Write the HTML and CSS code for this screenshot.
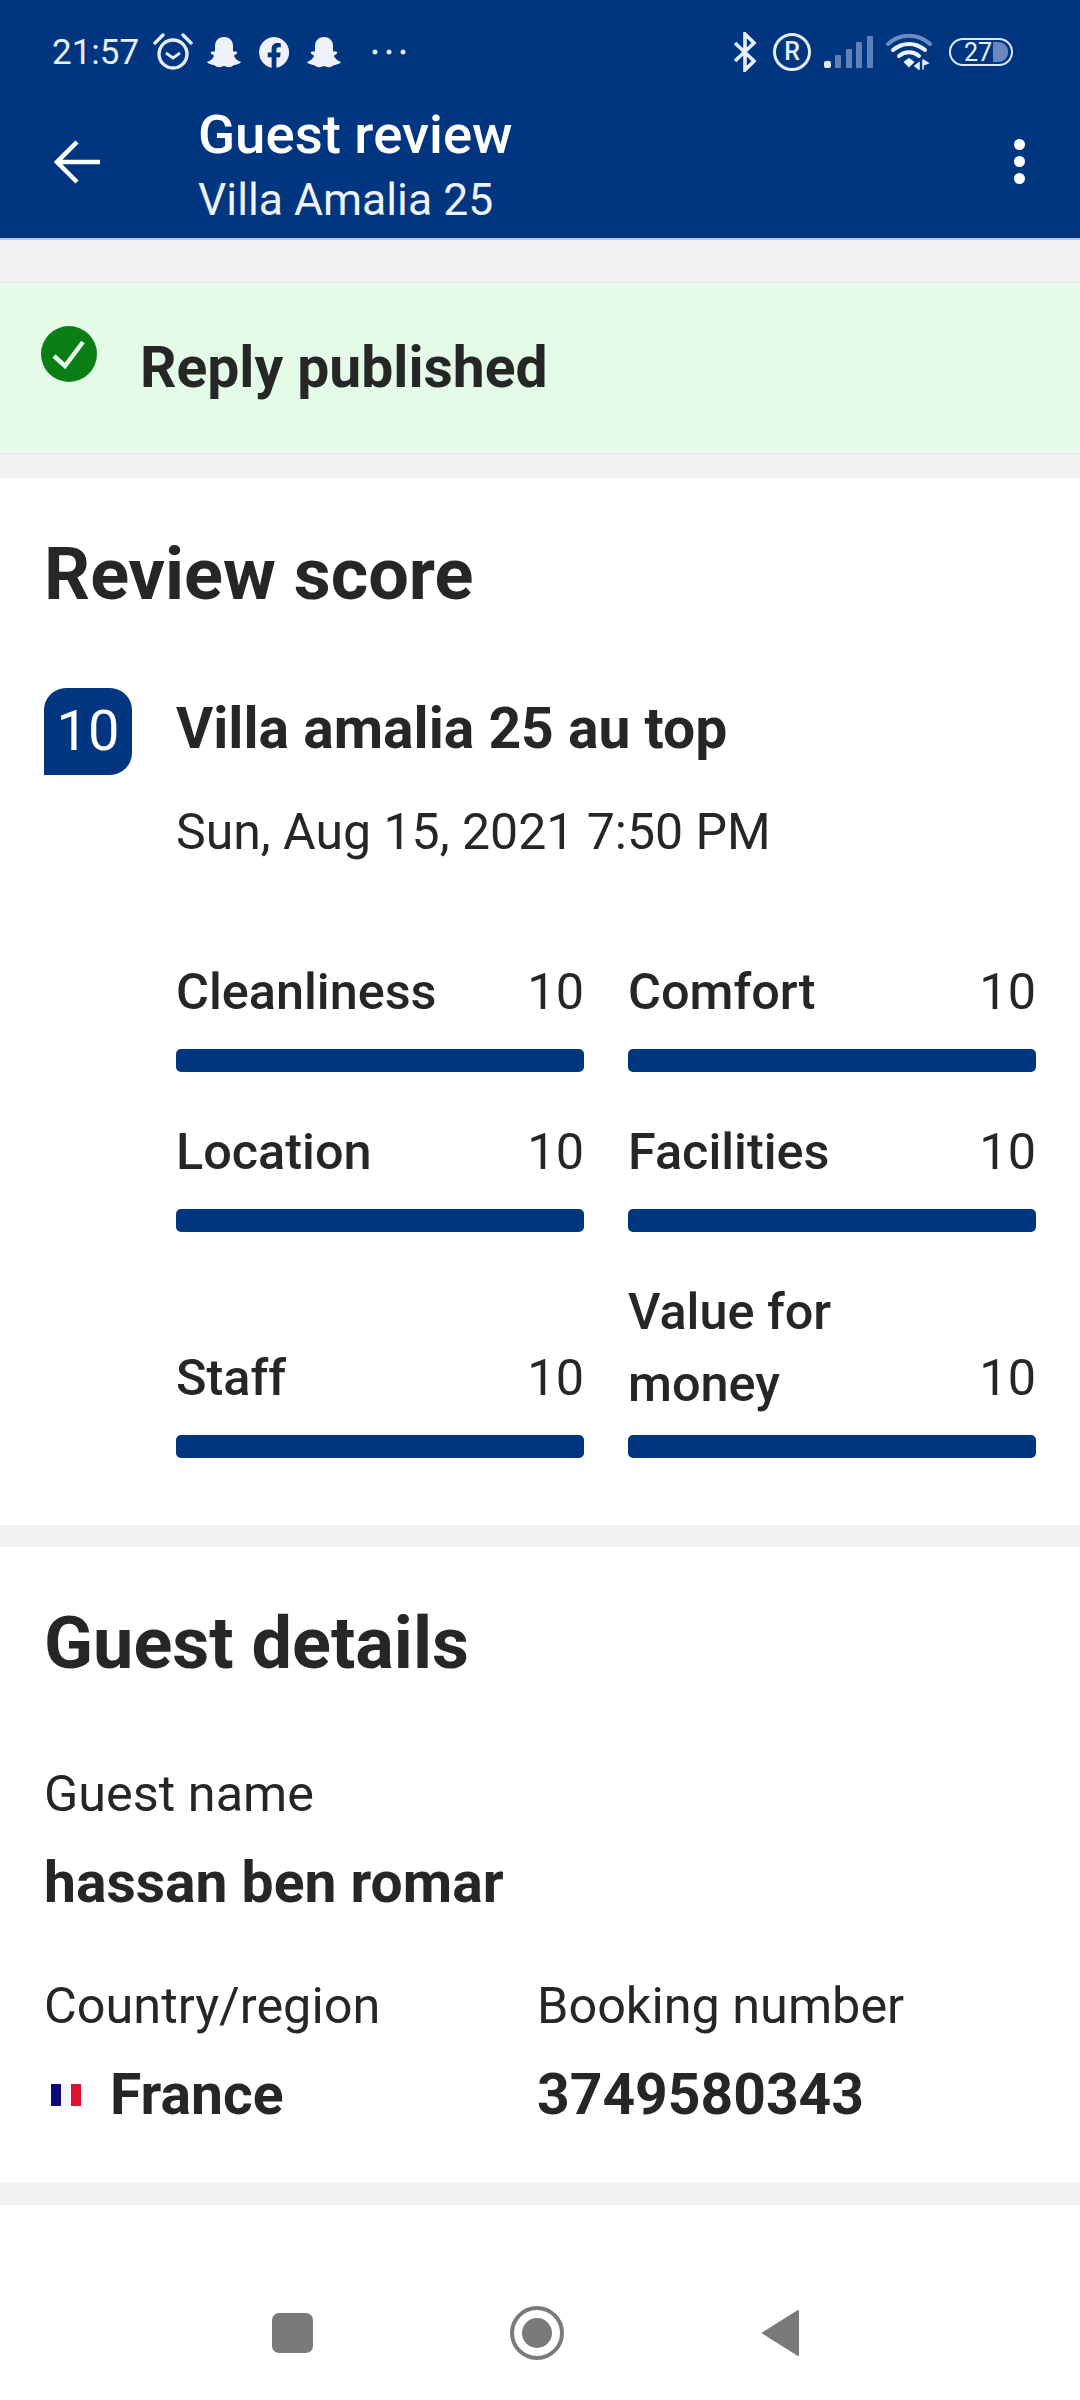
FILE: index.html
```html
<!DOCTYPE html>
<html lang="en">
<head>
  <meta charset="UTF-8">
  <title>Guest review</title>
  <link rel="stylesheet" href="styles.css">
</head>
<body>
  <header class="header">
    <div class="status-bar">
      <div class="status-left">
        <span class="time">21:57</span>
        <svg class="ic-alarm" viewBox="0 0 40 38" fill="none" stroke="#e6eefa" stroke-width="3.400">
          <circle cx="20" cy="21" r="14"/>
          <path d="M13 20l7 5 7-5" stroke-width="2.800"/>
          <path d="M2 10L10 2M38 10L30 2" stroke-linecap="round"/>
        </svg>
        <svg class="ic-ghost" viewBox="0 0 34 32"><path fill="#eef1f8" d="M17 1c6 0 9 4 9 9v5c1 1 3 0 4 1 1 2-3 3-3 4 1 3 4 5 7 6-1 2-4 2-6 3-2 0-3 2-5 2-2 1-4-1-6-1s-4 2-6 1c-2 0-3-2-5-2-2-1-5-1-6-3 3-1 6-3 7-6 0-1-4-2-3-4 1-1 3 0 4-1v-5c0-5 3-9 9-9z"/></svg>
        <svg class="ic-fb" viewBox="0 0 32 32"><path fill="#eef1f8" d="M16 0a16 16 0 0 0-3 31.700V21H9v-5h4v-3.500c0-4 2.400-6.200 6-6.200 1.800 0 3.500.3 3.500.3v4h-2c-2 0-2.500 1.200-2.500 2.500V16h4.400l-.7 5H18v10.700A16 16 0 0 0 16 0z"/></svg>
        <svg class="ic-ghost ghost-last" viewBox="0 0 34 32"><path fill="#eef1f8" d="M17 1c6 0 9 4 9 9v5c1 1 3 0 4 1 1 2-3 3-3 4 1 3 4 5 7 6-1 2-4 2-6 3-2 0-3 2-5 2-2 1-4-1-6-1s-4 2-6 1c-2 0-3-2-5-2-2-1-5-1-6-3 3-1 6-3 7-6 0-1-4-2-3-4 1-1 3 0 4-1v-5c0-5 3-9 9-9z"/></svg>
        <svg class="ic-more" viewBox="0 0 34 6" fill="#dfe7f5"><circle cx="3" cy="3" r="2.500"/><circle cx="17" cy="3" r="2.500"/><circle cx="31" cy="3" r="2.500"/></svg>
      </div>
      <div class="status-right">
        <svg class="ic-bt" viewBox="0 0 26 40" fill="none" stroke="#e6f0fc" stroke-width="3.600"><path d="M3 11l19 18-9 9V2l9 9L3 29"/></svg>
        <span class="reg">R</span>
        <svg class="ic-signal" viewBox="0 0 49 32">
          <rect x="0" y="25" width="7" height="7" rx="2" fill="#dfe9f8"/>
          <rect x="11" y="19" width="6" height="13" rx="1" fill="#5f80b8"/>
          <rect x="22" y="13" width="6" height="19" rx="1" fill="#5f80b8"/>
          <rect x="32" y="6" width="6" height="26" rx="1" fill="#5f80b8"/>
          <rect x="43" y="0" width="6" height="32" rx="1" fill="#5f80b8"/>
        </svg>
        <svg class="ic-wifi" viewBox="0 0 46 36" fill="none" stroke-linecap="round">
          <path d="M2 10C14-1 32-1 44 10" stroke="#6f8cc0" stroke-width="4"/>
          <path d="M7 16c10-8 22-8 32 0" stroke="#f0f5fc" stroke-width="4"/>
          <path d="M13 22c6-5 14-5 20 0" stroke="#f0f5fc" stroke-width="4"/>
          <path d="M19 28l4-3 4 3-4 4z" fill="#f0f5fc" stroke="#f0f5fc" stroke-width="2"/>
          <path d="M33 29l-4 3 4 3zM37 26v9M37 26l5 3-5 2" stroke="#e6eefa" stroke-width="1.600" fill="#e6eefa"/>
        </svg>
        <div class="battery"><span class="battery-num">27</span><span class="battery-fill"></span></div>
      </div>
    </div>
    <div class="app-bar">
      <svg class="ic-back" viewBox="0 0 46 44" fill="none" stroke="#fff" stroke-width="4.500"><path d="M46 22H4M23 2L3 22l20 20"/></svg>
      <div class="app-title">
        <h1>Guest review</h1>
        <p>Villa Amalia 25</p>
      </div>
      <div class="kebab"><i></i><i></i><i></i></div>
    </div>
  </header>

  <div class="banner">
    <svg class="ic-check" viewBox="0 0 56 56">
      <circle cx="28" cy="28" r="28" fill="#0a7d14"/>
      <path d="M13 30l11 10L42 16" fill="none" stroke="#e8fbe8" stroke-width="4.500"/>
    </svg>
    <span class="banner-text">Reply published</span>
  </div>

  <section class="card score-card">
    <h2>Review score</h2>
    <div class="review-row">
      <div class="badge">10</div>
      <div class="review-info">
        <div class="review-title">Villa amalia 25 au top</div>
        <div class="review-date">Sun, Aug 15, 2021 7:50 PM</div>
      </div>
    </div>
    <div class="scores">
      <div class="score">
        <div class="score-head"><span>Cleanliness</span><span>10</span></div>
        <div class="bar"></div>
      </div>
      <div class="score">
        <div class="score-head"><span>Comfort</span><span>10</span></div>
        <div class="bar"></div>
      </div>
      <div class="score">
        <div class="score-head"><span>Location</span><span>10</span></div>
        <div class="bar"></div>
      </div>
      <div class="score">
        <div class="score-head"><span>Facilities</span><span>10</span></div>
        <div class="bar"></div>
      </div>
      <div class="score">
        <div class="score-head"><span>Staff</span><span>10</span></div>
        <div class="bar"></div>
      </div>
      <div class="score">
        <div class="score-head"><span class="narrow">Value for money</span><span>10</span></div>
        <div class="bar"></div>
      </div>
    </div>
  </section>

  <section class="card guest-card">
    <h2>Guest details</h2>
    <div class="label first-label">Guest name</div>
    <div class="value">hassan ben romar</div>
    <div class="guest-cols">
      <div class="guest-col">
        <div class="label">Country/region</div>
        <div class="value country">
          <svg class="flag" viewBox="0 0 30 22">
            <rect width="10" height="22" fill="#0a0a78"/>
            <rect x="10" width="10" height="22" fill="#f4f4fa"/>
            <rect x="20" width="10" height="22" fill="#dc1430"/>
          </svg>
          France
        </div>
      </div>
      <div class="guest-col">
        <div class="label">Booking number</div>
        <div class="value">3749580343</div>
      </div>
    </div>
  </section>

  <nav class="nav-bar">
    <span class="nav-square"></span>
    <span class="nav-home"><i></i></span>
    <svg class="nav-back" viewBox="0 0 37 46"><path fill="#7a7a7a" stroke="#7a7a7a" stroke-width="2" stroke-linejoin="round" d="M36 1v44L1 23z"/></svg>
  </nav>
</body>
</html>
```

FILE: styles.css
```css
* {
  box-sizing: border-box;
}

html, body {
  margin: 0;
  padding: 0;
}

body {
  width: 1080px;
  height: 2400px;
  overflow: hidden;
  font-family: Roboto, "Liberation Sans", sans-serif;
  background: #f2f2f2;
  color: #262626;
}

h1, h2, p {
  margin: 0;
}

/* header */
.header {
  background: #003580;
  height: 238px;
  color: #fff;
  box-shadow: 0 2px 0 #b9c7e2;
}

.status-bar {
  height: 104px;
  display: flex;
  justify-content: space-between;
  align-items: center;
  padding: 0 67px 0 52px;
}

.status-left,
.status-right {
  display: flex;
  align-items: center;
}

.time {
  font-size: 35px;
  color: #e6eefa;
  width: 101px;
}

.ic-alarm {
  width: 40px;
  height: 38px;
  margin-right: 14px;
}

.ic-ghost {
  width: 34px;
  height: 32px;
  margin-right: 18px;
}

.ghost-last {
  margin-right: 31px;
}

.ic-fb {
  width: 31px;
  height: 31px;
  margin-right: 17px;
}

.ic-more {
  width: 34px;
  height: 6px;
}

.ic-bt {
  width: 26px;
  height: 40px;
  margin-right: 15px;
}

.reg {
  width: 38px;
  height: 38px;
  border: 3px solid #e6f0fc;
  border-radius: 50%;
  font-size: 25px;
  font-weight: 500;
  line-height: 32px;
  text-align: center;
  color: #e6f0fc;
  margin-right: 13px;
}

.ic-signal {
  width: 49px;
  height: 32px;
  margin-right: 13px;
}

.ic-wifi {
  width: 46px;
  height: 36px;
  margin-right: 17px;
}

.battery {
  width: 64px;
  height: 28px;
  border: 2px solid #dfe9f8;
  border-radius: 14px;
  display: flex;
  align-items: center;
  padding: 0 3px 0 13px;
}

.battery-num {
  font-size: 25px;
  color: #eef3fb;
  width: 29px;
}

.battery-fill {
  width: 15px;
  height: 20px;
  background: #6a88bd;
  border-radius: 0 9px 9px 0;
}

.app-bar {
  height: 134px;
  display: flex;
  align-items: flex-start;
}

.ic-back {
  width: 46px;
  height: 44px;
  margin: 36px 0 0 54px;
}

.app-title {
  margin-left: 98px;
  flex: 1;
}

.app-title h1 {
  font-size: 54.500px;
  font-weight: 500;
  line-height: 60px;
}

.app-title p {
  font-size: 44.500px;
  line-height: 72px;
  color: #eef3fb;
}

.kebab {
  display: flex;
  flex-direction: column;
  gap: 6px;
  margin: 35px 55px 0 0;
}

.kebab i {
  display: block;
  width: 11px;
  height: 11px;
  border-radius: 50%;
  background: #fff;
}

/* banner */
.banner {
  margin-top: 44px;
  height: 172px;
  background: #e4fbe8;
  border-top: 1px solid #e6e8e6;
  border-bottom: 1px solid #e6e8e6;
  display: flex;
  align-items: flex-start;
  padding-left: 41px;
}

.ic-check {
  width: 56px;
  height: 56px;
  margin-top: 43px;
}

.banner-text {
  margin: 50px 0 0 43px;
  font-size: 57px;
  font-weight: 700;
  line-height: 70px;
}

/* cards */
.card {
  background: #fff;
  padding-left: 44px;
  padding-right: 44px;
}

.card h2 {
  font-size: 72px;
  font-weight: 700;
  line-height: 80px;
}

.score-card {
  margin-top: 24px;
  height: 1047px;
  padding-top: 57px;
}

.review-row {
  display: flex;
  margin-top: 73px;
}

.badge {
  width: 88px;
  height: 87px;
  background: #003580;
  color: #fff;
  font-size: 56px;
  line-height: 87px;
  text-align: center;
  border-radius: 22px 22px 22px 0;
}

.review-info {
  margin-left: 44px;
}

.review-title {
  font-size: 57px;
  font-weight: 700;
  line-height: 82px;
}

.review-date {
  font-size: 50px;
  line-height: 70px;
  margin-top: 27px;
}

.scores {
  margin: 92px 0 0 132px;
  display: grid;
  grid-template-columns: 408px 408px;
  column-gap: 44px;
  row-gap: 47px;
  align-items: end;
}

.score-head {
  display: flex;
  justify-content: space-between;
  align-items: flex-end;
  font-size: 50.400px;
  line-height: 66px;
}

.score-head span:first-child {
  font-weight: 500;
}

.narrow {
  width: 230px;
  line-height: 72px;
  margin: -3px 0 -9px;
}

.bar {
  height: 23px;
  margin-top: 24px;
  background: #003580;
  border-radius: 5px;
}

.guest-card {
  margin-top: 22px;
  height: 635px;
  padding-top: 57px;
}

.label {
  font-size: 50.400px;
  line-height: 60px;
}

.first-label {
  margin-top: 80px;
}

.value {
  font-size: 57px;
  font-weight: 700;
  line-height: 70px;
  margin-top: 24px;
}

.guest-cols {
  display: flex;
  margin-top: 58px;
}

.guest-col:first-child {
  width: 493px;
}

.country {
  display: flex;
  align-items: center;
}

.flag {
  width: 30px;
  height: 22px;
  margin: 0 29px 0 7px;
}

/* system nav */
.nav-bar {
  margin-top: 23px;
  height: 197px;
  background: #fff;
  display: flex;
  align-items: center;
  padding: 58px 0 0 272px;
}

.nav-square {
  width: 41px;
  height: 40px;
  background: #7a7a7a;
  border-radius: 7px;
  margin-right: 197px;
}

.nav-home {
  width: 54px;
  height: 54px;
  border: 4px solid #7a7a7a;
  border-radius: 50%;
  display: flex;
  align-items: center;
  justify-content: center;
  margin-right: 198px;
}

.nav-home i {
  display: block;
  width: 30px;
  height: 30px;
  background: #7a7a7a;
  border-radius: 50%;
}

.nav-back {
  width: 37px;
  height: 46px;
}
```
